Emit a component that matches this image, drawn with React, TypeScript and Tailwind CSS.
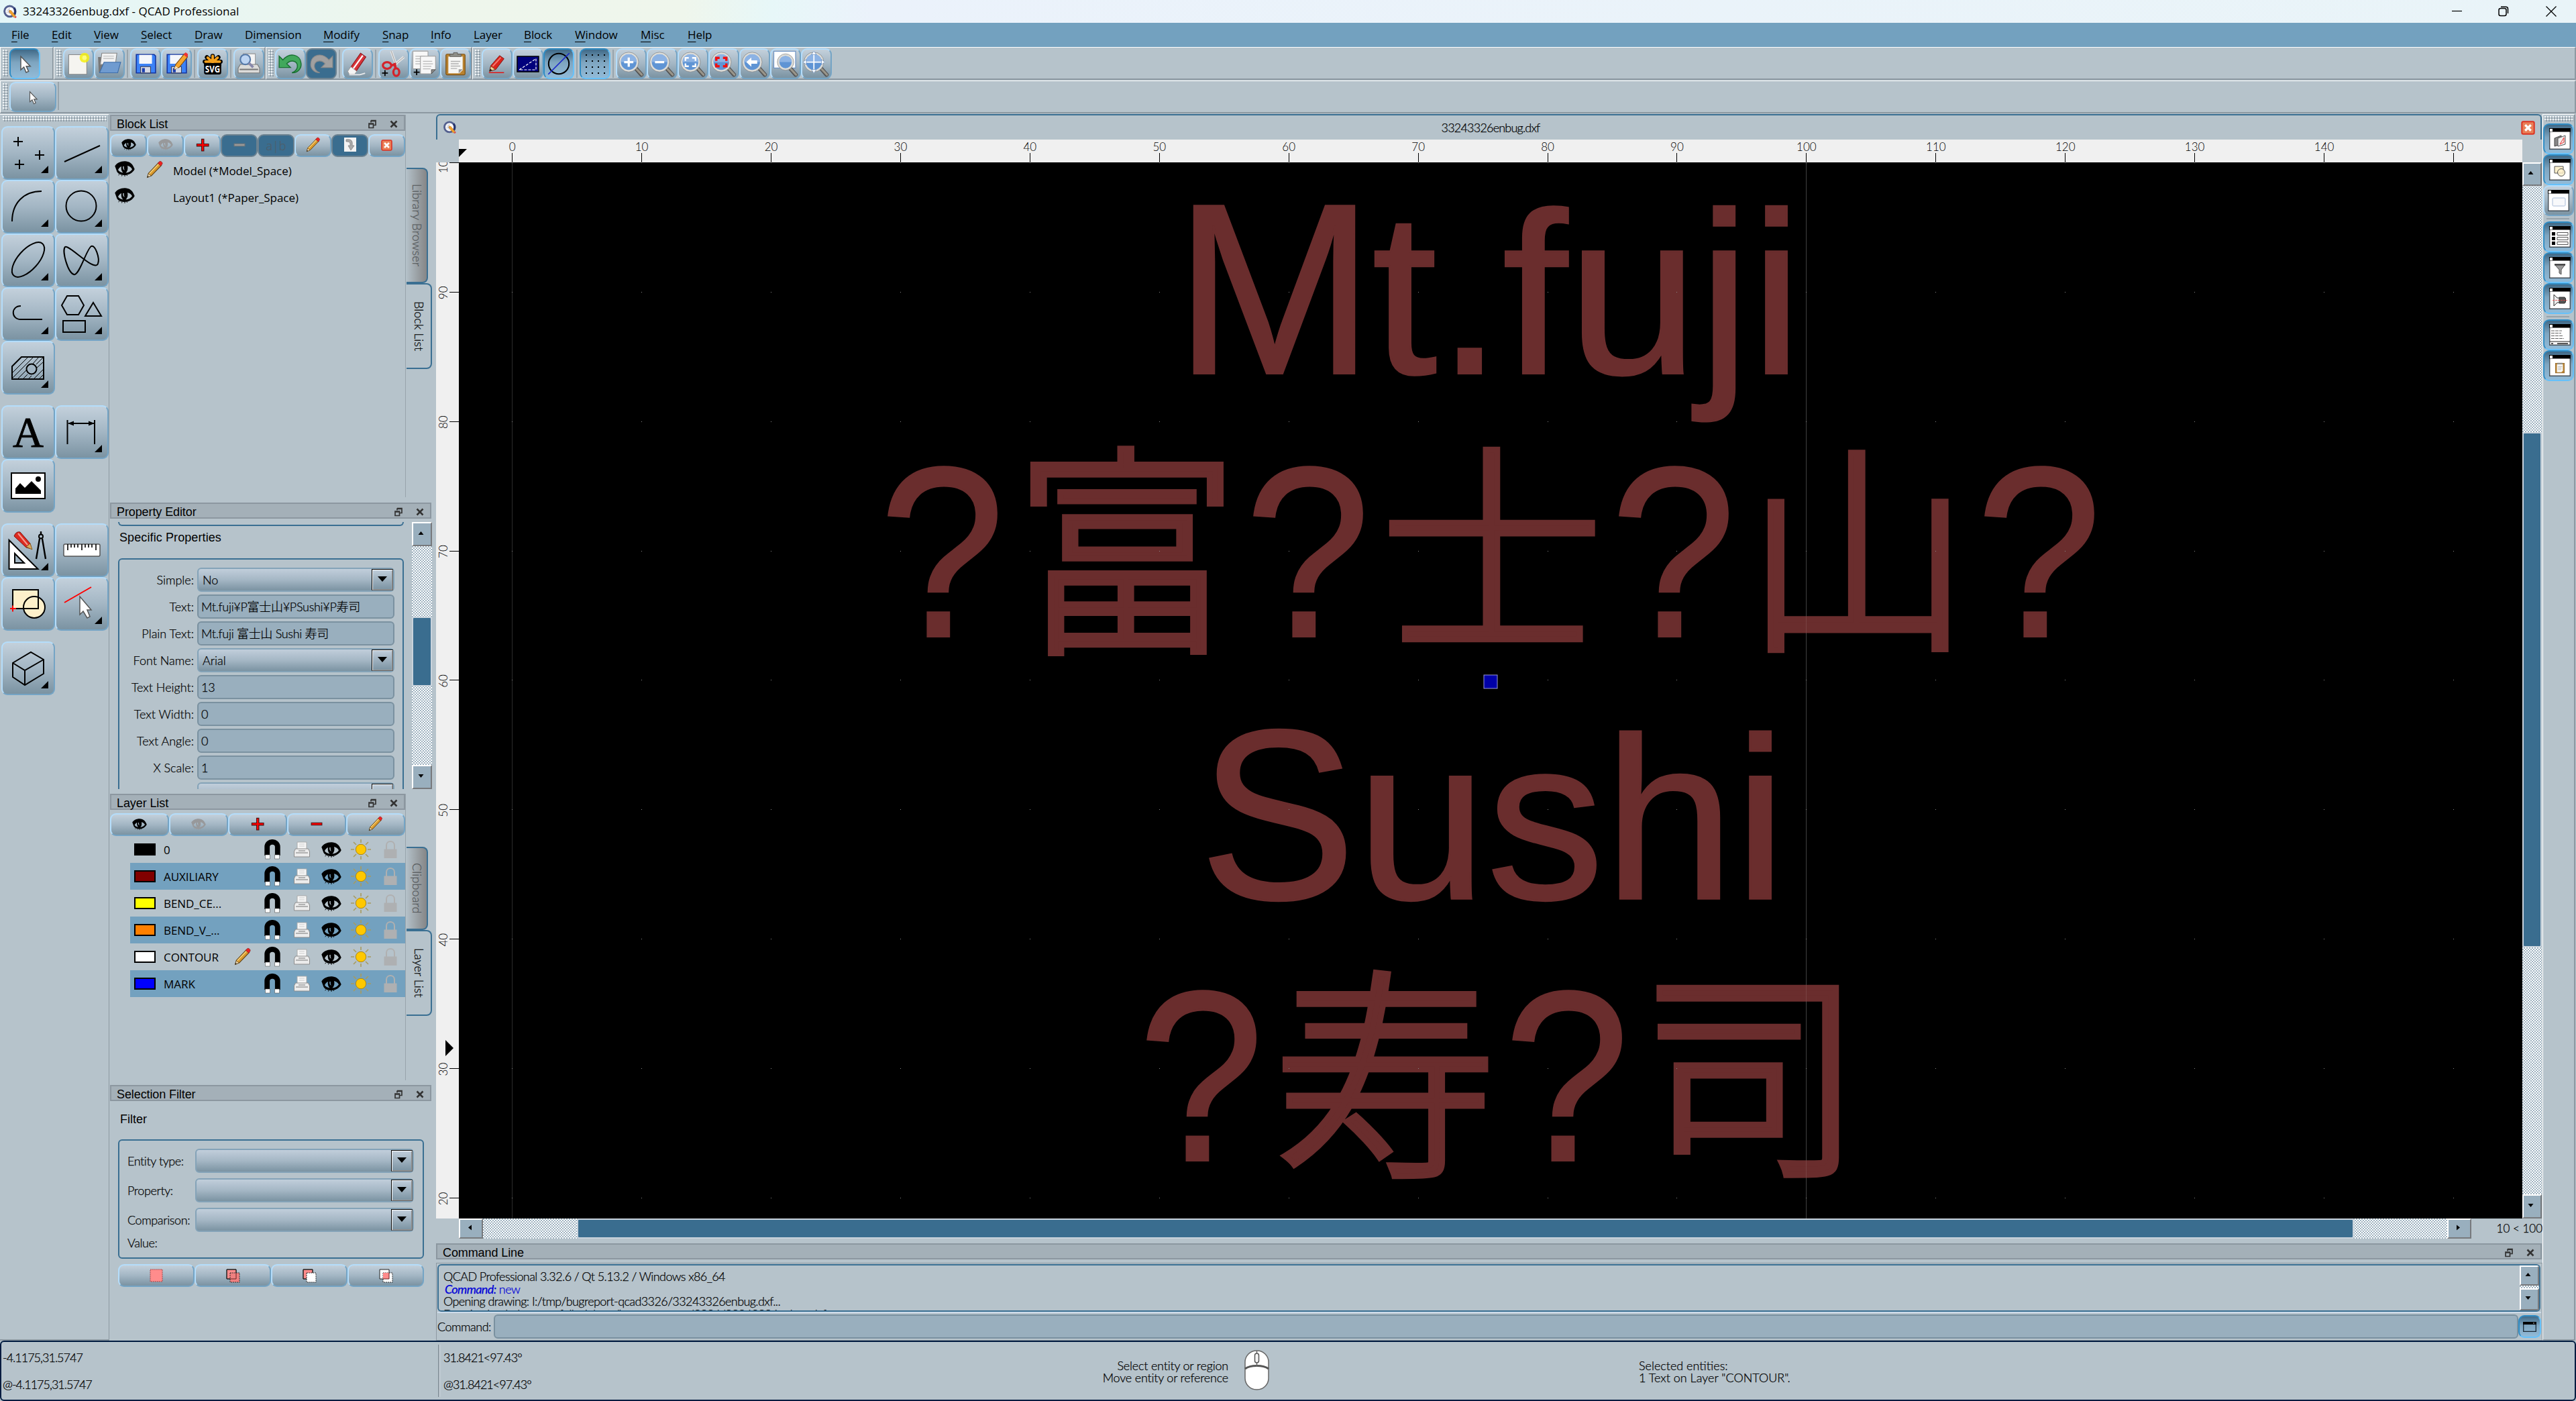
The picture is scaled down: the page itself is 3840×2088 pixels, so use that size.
import type { ReactNode } from "react";
import clsx from "clsx";

const thin = "font-['Lato','Noto_Sans_CJK_JP',sans-serif] font-light text-black [-webkit-text-stroke:0.25px]";

/* ---------- icons ---------- */

type IconProps = { className?: string; off?: boolean };

function Svg({ className = "size-8", box = "0 0 32 32", children }: { className?: string; box?: string; children: ReactNode }) {
  return (
    <svg viewBox={box} className={clsx("shrink-0", className)} fill="none">
      {children}
    </svg>
  );
}

function Cursor({ className }: IconProps) {
  return (
    <Svg className={className}>
      <path d="M10 5v20l4.600-4 3.400 8 3.600-1.600-3.400-7.600h6z" fill="#fff" stroke="#555" strokeWidth="1.500" />
    </Svg>
  );
}

function Eye({ className, off }: IconProps) {
  const c = off ? "#98999b" : "#000";
  return (
    <Svg className={className} box="0 0 30 23">
      <path
        fillRule="evenodd"
        fill={c}
        d="M.3 7.500C3 3 9 0 15.500.3 21 .5 26 3.500 28 8.500l1.700 3.500C27 18 20 21.300 14 21 8 20.800 3.500 18 2.700 14 1.800 11.500 1 9.500.3 7.500zM5 13.300c1.500 2 4 3.600 7.500 4.200C10 15 9.200 11.500 10 8c-2 .8-4 2.500-5 5.300zM19 7c1 4 .3 8-2.500 10.500 4-.3 7.500-2 9.500-5.200C24.500 9.500 22 7.600 19 7zM12.300 8c-.4 3.500.8 5.700 2.700 5.500-1-.8-1.500-3-1.200-5.500z"
      />
      <path d="M7 20l-1.500 1M11 21l-.5 1.500M15 20.500V23M18 20.500l.5 1.500" stroke={c} />
    </Svg>
  );
}

function Pencil({ className }: IconProps) {
  return (
    <Svg className={className}>
      <path d="M3 29l2-7L22 4l5 4.500L10 26z" fill="#d99a2e" stroke="#5a3d12" strokeWidth="1.200" />
      <path d="M6.500 22.500L22.500 6" stroke="#f7d27a" strokeWidth="1.800" />
      <path d="M21 5l2.500-3c2-1.500 6 1.500 5 4l-2.500 3.500z" fill="#ee2222" stroke="#8a1a1a" strokeWidth=".8" />
      <path d="M3 29l1.800-6.500 4.700 3.800z" fill="#f0dcb4" stroke="#5a3d12" strokeWidth=".8" />
      <path d="M3 29l.7-2.800 2 1.700z" fill="#222" />
    </Svg>
  );
}

function Plus({ className }: IconProps) {
  return (
    <Svg className={className}>
      <path d="M14 4.500h4.500V14H28v4.500h-9.500V28H14v-9.500H4.500V14H14z" fill="#f00" stroke="#4a1414" strokeWidth="1.500" />
    </Svg>
  );
}

function Minus({ className, off }: IconProps) {
  return (
    <Svg className={className}>
      <path d="M4.500 13.500h23v5h-23z" fill={off ? "#9a9a9a" : "#f00"} stroke={off ? "#777" : "#4a1414"} strokeWidth="1.500" />
    </Svg>
  );
}

function CloseBox({ className }: IconProps) {
  return (
    <Svg className={className}>
      <rect x="2" y="2" width="28" height="28" rx="3" fill="#e98058" stroke="#dc3222" strokeWidth="3" />
      <path d="M9.500 9.500l13 13M22.500 9.500l-13 13" stroke="#fff" strokeWidth="5" />
    </Svg>
  );
}

function Logo({ className }: IconProps) {
  return (
    <Svg className={className}>
      <circle cx="16" cy="15" r="12" fill="#fff" stroke="#53608f" strokeWidth="4.500" />
      <path d="M26 7c4 6 4 12-1 18" stroke="#26346c" strokeWidth="4.500" />
      <path d="M8 17h14M15 7v15M9 12l12 8M11 9l6 6" stroke="#99a" strokeWidth="1" />
      <path d="M15 13l4 0 10 12-4 4-10-12z" fill="#f2a02c" stroke="#a86312" strokeWidth=".7" />
      <path d="M26 29l4-4 1.500 3-2.500 2.500z" fill="#d44" />
    </Svg>
  );
}

function Magnifier({ children, page }: { children?: ReactNode; page?: boolean }) {
  return (
    <Svg className="size-10">
      {page && <path d="M2 1h26v20H2z" fill="#fff" stroke="#6d93c4" />}
      <path d="M21 21l7 8" stroke="#555" strokeWidth="5" strokeLinecap="round" />
      <path d="M22.500 22.500l6 6.500" stroke="#99958a" strokeWidth="2.600" strokeLinecap="round" />
      <circle cx={page ? 16 : 13} cy="14" r={page ? 8.500 : 10.500} fill="#5f94d4" stroke="#dcdcd8" strokeWidth="2.400" />
      <path d={page ? "M8.500 14a7.500 7.500 0 0115 0z" : "M3.500 14a9.500 9.500 0 0119 0z"} fill="#8db3e4" />
      <circle cx={page ? 16 : 13} cy="14" r={page ? 9.800 : 11.800} stroke="#888" strokeWidth=".6" />
      {children}
    </Svg>
  );
}

function Floppy({ children }: { children?: ReactNode }) {
  return (
    <Svg className="size-[34px]">
      <path d="M3 3h25l2 2v24H3z" fill="#3c82f6" stroke="#1434a0" strokeWidth="1.500" />
      <path d="M7 3.500h18V16H7z" fill="#f4f6fb" />
      <path d="M9 20h14v9H9z" fill="#d4d8e4" stroke="#223" strokeWidth=".8" />
      <path d="M11 22h4v6h-4z" fill="#1c3fae" />
      {children}
    </Svg>
  );
}

function ClipboardIcon({ className = "size-[38px]" }: IconProps) {
  return (
    <Svg className={className}>
      <rect x="4" y="4" width="24" height="26" rx="1.500" fill="#b9822f" stroke="#7a5014" />
      <path d="M7 7h18v17l-4 4H7z" fill="#f6f6f4" />
      <path d="M10 13h12M10 16h10M10 19h12M10 22h8" stroke="#b0b0b0" strokeWidth="1.200" />
      <path d="M25 23l-5 5v-5z" fill="#999" />
      <path d="M9 7V4h4.500V2h5v2H23v3z" fill="#8f8f88" stroke="#555" strokeWidth=".7" />
    </Svg>
  );
}

function Sheet({ x, y }: { x: number; y: number }) {
  return (
    <g transform={`translate(${x} ${y})`}>
      <path d="M0 0h18v16l-5 5H0z" fill="#f7f7f7" stroke="#999" strokeWidth=".8" />
      <path d="M3 6h11M3 9h12M3 12h10M3 15h9" stroke="#b8b8b8" />
      <path d="M18 16l-5 5v-5z" fill="#888" stroke="#444" strokeWidth=".6" />
    </g>
  );
}

const FloatIcon = () => (
  <Svg className="h-[14px] w-[12px]" box="0 0 12 14">
    <path d="M4 1.500h7v7H8M4 1.500v3M4 2.500h7" stroke="#333" strokeWidth="1.700" />
    <path d="M1 6h6.500v6.500H1zM1 7h6.500" stroke="#333" strokeWidth="1.700" />
  </Svg>
);

const XIcon = () => (
  <Svg className="size-3" box="0 0 12 12">
    <path d="M1.500 1.500l9 9M10.500 1.500l-9 9" stroke="#333" strokeWidth="2.600" />
  </Svg>
);

/* ---------- building blocks ---------- */

function Btn({ on, off, className, children }: { on?: boolean; off?: boolean; className?: string; children?: ReactNode }) {
  return (
    <div
      className={clsx(
        "relative flex items-center justify-center overflow-hidden rounded-[9px] border-2",
        on
          ? "border-[#2f8cc4] border-r-[#66c1f9] border-b-[#66c1f9] bg-linear-to-b from-[#406a88] via-[#7ea5c0] via-45% to-[#92bbd8]"
          : off
            ? "border-[#6c8291] bg-[#3a6d8f]"
            : "border-[#b4ddfb] border-r-[#74a4c5] border-b-[#74a4c5] bg-linear-to-b from-[#c3d0db] via-[#a3b6c4] to-[#7b93a2]",
        className
      )}
    >
      {children}
    </div>
  );
}

const TB = "h-[46px] w-[46px]";

const Dots = ({ className }: { className: string }) => (
  <div className={clsx("bg-[conic-gradient(from_270deg_at_2px_2px,#f3f6f8_90deg,transparent_90deg_180deg,#8e9ba5_180deg_270deg,transparent_270deg)] bg-[length:4px_4px]", className)} />
);

const Sep = () => <div className="mx-[3px] h-[42px] w-[2px] shrink-0 self-center bg-[#98a4ac]" />;

function Bar({ className, children }: { className: string; children?: ReactNode }) {
  return (
    <div className={clsx("flex h-[49px] items-start border-t border-r-2 border-b-2 border-l border-t-white border-r-[#8d99a2] border-b-[#8d99a2] border-l-white pt-px pl-[3px]", className)}>
      <Dots className="mt-0.5 mr-0.5 h-10 w-2 shrink-0" />
      {children}
    </div>
  );
}

function DockTitle({ children, className }: { children: ReactNode; className?: string }) {
  return (
    <div className={clsx("flex h-6 shrink-0 items-center border-2 border-[#8c97a0] bg-[#a4b0b8] pr-[9px] pl-2 font-['Liberation_Sans'] text-[18px] font-normal tracking-[-0.1px] text-black [-webkit-text-stroke:0]", className)}>
      <span className="flex-1 pt-[3px] leading-none whitespace-nowrap">{children}</span>
      <div className="flex items-center gap-5 pt-[3px]">
        <FloatIcon />
        <XIcon />
      </div>
    </div>
  );
}

function Combo({ value, className }: { value?: string; className?: string }) {
  return (
    <div className={clsx("flex items-stretch justify-between rounded-md border-2 border-[#84a3b8] bg-linear-to-b from-[#c1cedb] via-[#a5b7c5] to-[#7b93a2] pl-1.5", className)}>
      <span className="self-center text-[18px] leading-none">{value}</span>
      <div className="flex w-8 items-center justify-center border border-t-black border-r-[#666] border-b-[#666] border-l-black bg-linear-to-b from-[#c1cedb] to-[#7b93a2] shadow-[inset_1px_1px_0_#fff,inset_-1px_-1px_0_#999]">
        <svg viewBox="0 0 14 8" className="-mt-0.5 h-2 w-3.5">
          <path d="M0 0h14L7 8z" />
        </svg>
      </div>
    </div>
  );
}

const arrows = {
  up: "M0 5h8L4 0z",
  down: "M0 0h8L4 5z",
  left: "M5 0v8L0 4z",
  right: "M0 0v8l5-4z",
};

function ScrollBtn({ dir, className }: { dir: keyof typeof arrows; className: string }) {
  const tall = dir === "left" || dir === "right";
  return (
    <div className={clsx("flex shrink-0 items-center justify-center border-2 border-t-white border-r-[#77797c] border-b-[#77797c] border-l-white bg-[#99afbe] pr-1 pb-1", className)}>
      <svg viewBox={tall ? "0 0 5 8" : "0 0 8 5"} className={tall ? "h-[9px] w-[5px]" : "h-[5px] w-[9px]"}>
        <path d={arrows[dir]} />
      </svg>
    </div>
  );
}

const checker = "bg-[repeating-conic-gradient(#fff_0_25%,#9fb3c1_0_50%)] bg-[length:4px_4px]";
const thumb = "shrink-0 rounded-[3px] border-2 border-[#c9d3dc] bg-[#3a6d8f]";

function SideTabs({ first, second, h1, h2, className }: { first: string; second: string; h1: string; h2: string; className: string }) {
  return (
    <div className={clsx("flex flex-col items-start text-[18px]", className)}>
      <div className={clsx("flex w-8 items-center justify-center rounded-r-lg border-2 border-l-0 border-[#3a6f92] bg-linear-to-r from-[#b3c0c8] to-[#858687] text-[#55595c] [writing-mode:vertical-rl]", h1)}>
        <span className="tracking-[0.1px]">{first}</span>
      </div>
      <div className={clsx("flex w-[38px] items-center justify-center rounded-r-lg border-2 border-l-0 border-[#3a6f92] [writing-mode:vertical-rl]", h2)}>
        <span>{second}</span>
      </div>
    </div>
  );
}

/* ---------- header ---------- */

const menus = [
  ["F", "ile", "w-[60px]"],
  ["E", "dit", "w-[63px]"],
  ["V", "iew", "w-[70px]"],
  ["S", "elect", "w-[80px]"],
  ["D", "raw", "w-[75px]"],
  ["D", "imension", "w-[117px]"],
  ["M", "odify", "w-[88px]"],
  ["S", "nap", "w-[72px]"],
  ["I", "nfo", "w-[64px]"],
  ["L", "ayer", "w-[75px]"],
  ["B", "lock", "w-[76px]"],
  ["W", "indow", "w-[98px]"],
  ["M", "isc", "w-[70px]"],
  ["H", "elp", "w-[60px]"],
];

function Header() {
  return (
    <>
      <div className="flex h-[34px] items-center bg-[linear-gradient(90deg,#e4f6f8_0,#eef6ec_660px,#eff6ec_1020px,#e7f7f8_1150px,#ebf2fb_1300px,#e9f4f8_3840px)] pr-[29px] pl-1">
        <Logo className="size-[21px]" />
        <span className="ml-[9px] flex-1 font-['Open_Sans'] text-[17px] tracking-[0.05px] text-black">33243326enbug.dxf - QCAD Professional</span>
        <Svg className="mr-[54px] h-4 w-[15px]" box="0 0 15 16">
          <path d="M0 7.500h15" stroke="#000" strokeWidth="1.200" />
        </Svg>
        <Svg className="mr-[55px] size-4" box="0 0 16 16">
          <rect x="1" y="3.500" width="11" height="11" rx="2.500" stroke="#000" strokeWidth="1.500" />
          <path d="M4 1.200h7.500a3 3 0 013 3V11" stroke="#000" strokeWidth="1.500" />
        </Svg>
        <Svg className="size-4" box="0 0 16 16">
          <path d="M.5.5l15 15M15.500.5l-15 15" stroke="#000" strokeWidth="1.300" />
        </Svg>
      </div>
      <div className="flex h-9 items-center bg-[#73a1bf] pl-[17px] font-['Open_Sans'] text-[17px] tracking-[-0.1px] text-black">
        {menus.map(([k, rest, w], i) => (
          <span key={i} className={w}>
            {rest === "imension" ? (
              <>D<u className="decoration-1 underline-offset-4">i</u>mension</>
            ) : (
              <><u className="decoration-1 underline-offset-4">{k}</u>{rest}</>
            )}
          </span>
        ))}
      </div>
    </>
  );
}

function Toolbars() {
  return (
    <>
      <div className="flex h-[50px]">
        <Bar className="w-20">
          <Btn on className={TB}><Cursor className="size-8" /></Btn>
        </Bar>
        <Bar className="w-[316px]">
          <Btn className={TB}>
            <Svg className="size-9">
              <path d="M3 4h24v26H3z" fill="#f5f4f0" stroke="#888" />
              <circle cx="24" cy="8" r="6.500" fill="#f4ee10" fillOpacity=".85" />
              <circle cx="24" cy="8" r="3" fill="#fdfb80" />
            </Svg>
          </Btn>
          <Btn className={TB}>
            <Svg className="size-9">
              <path d="M1 7h9l2 2h8v18H2z" fill="#777" />
              <path d="M6 2h20l-2 15H4z" fill="#f2f2f2" stroke="#888" />
              <path d="M8 6h14M8 9h14" stroke="#bbb" />
              <path d="M9 14h22l-4 14H3z" fill="#6f9bd0" stroke="#3e6da8" />
            </Svg>
          </Btn>
          <Sep />
          <Btn className={TB}><Floppy /></Btn>
          <Btn className={TB}>
            <Floppy>
              <path d="M13 24l2-7L27 2l5 4-12 15z" fill="#f5a52c" stroke="#7a4a10" />
              <path d="M13 24l1.500-5 4 3z" fill="#f3e2c0" />
              <path d="M26 3l3-3 4 3-2.500 4z" fill="#e33" />
            </Floppy>
          </Btn>
          <Sep />
          <Btn className={TB}>
            <Svg className="size-[34px]">
              <path d="M16 14V5M16 14L8 7M16 14l8-7M16 13H5M16 13h11" stroke="#000" strokeWidth="6" strokeLinecap="round" />
              <rect x="4" y="14" width="24" height="17" rx="3" fill="#000" />
              <path d="M16 14V5M16 14L9 7.500M16 14l7-6.500M16 13H6M16 13h10" stroke="#f5a01c" strokeWidth="3.600" strokeLinecap="round" />
              <path d="M4 15h24v4H4z" fill="#000" />
              <text x="16" y="28.500" textAnchor="middle" fontSize="13" fontWeight="700" fill="#fff" fontFamily="Open Sans" textLength="21" lengthAdjust="spacingAndGlyphs">SVG</text>
            </Svg>
          </Btn>
          <Sep />
          <Btn className={TB}>
            <Svg className="size-[34px]">
              <path d="M8 2h17v16H8z" fill="#f4f4f4" stroke="#999" />
              <path d="M4 17h24l3 5v7H1v-7z" fill="#dcdcda" stroke="#777" />
              <path d="M3 24h26" stroke="#777" strokeWidth="2" />
              <circle cx="11" cy="10" r="7" fill="#bcd4f2" stroke="#5579a8" strokeWidth="2" />
              <path d="M16 15l6 6" stroke="#88a" strokeWidth="3.500" />
            </Svg>
          </Btn>
        </Bar>
        <Bar className="w-[308px]">
          <Btn className={TB}>
            <Svg className="size-9">
              <path d="M1 6v15h15l-5-5c4-5 12-5 14 1 1 5-2 9-7 11 8 0 13-6 12-13C29 4 15 0 6 11z" fill="#41a85c" stroke="#197032" strokeWidth="1.300" />
            </Svg>
          </Btn>
          <Btn off className={TB}>
            <Svg className="size-9">
              <path d="M31 6v15H16l5-5C17 11 9 11 7 17c-1 5 2 9 7 11C6 28 1 22 2 15 3 4 17 0 26 11z" fill="#a0a0a0" stroke="#8a8a8a" />
            </Svg>
          </Btn>
          <Sep />
          <Btn className={TB}>
            <Svg className="size-9">
              <path d="M6 22L20 2l7 5-13 19z" fill="#d8343a" stroke="#8c1518" />
              <path d="M10 23L23 5" stroke="#fff" strokeWidth="2" />
              <path d="M3 26l4-6 8 6-3 4H5z" fill="#f4f4f4" stroke="#999" strokeWidth=".8" />
              <path d="M5 30.500h14l7-2" stroke="#e8eaec" strokeWidth="1.600" />
            </Svg>
          </Btn>
          <Sep />
          <Btn className={TB}>
            <Svg className="size-10">
              <path d="M13 1l6 17M28 8L16 18" stroke="#e6e6e6" strokeWidth="3" />
              <path d="M13 1l6 17M28 8L16 18" stroke="#888" strokeWidth=".6" />
              <ellipse cx="8" cy="18" rx="5" ry="4" stroke="#d4222a" strokeWidth="2.600" />
              <ellipse cx="19" cy="26" rx="3.500" ry="4.500" stroke="#d4222a" strokeWidth="2.600" />
              <path d="M12 18l6-1M18 21l-1-6" stroke="#d4222a" strokeWidth="3" />
              <path d="M2 27h7M5.500 23.500v7" stroke="#000" strokeWidth="1.400" />
            </Svg>
          </Btn>
          <Btn className={TB}>
            <Svg className="size-10">
              <Sheet x={2} y={1} />
              <Sheet x={11} y={7} />
              <path d="M3 26h7M6.500 22.500v7" stroke="#000" strokeWidth="1.400" />
            </Svg>
          </Btn>
          <Btn className={TB}><ClipboardIcon /></Btn>
        </Bar>
        <Bar className="flex-1">
          <Btn className={TB}>
            <Svg className="size-[30px]">
              <path d="M4 28l2-9L20 3l7 5-13 17z" fill="#d9231c" stroke="#7c1410" />
              <path d="M9 20L22 6" stroke="#f47a70" strokeWidth="2" />
              <path d="M4 28l2-8 7 5z" fill="#efcf98" stroke="#5a3a12" strokeWidth=".7" />
              <path d="M4 28l1-4 3 2z" fill="#111" />
              <path d="M3 30h24" stroke="#e01818" strokeWidth="1.600" />
            </Svg>
          </Btn>
          <Btn className={TB}>
            <Svg className="h-[25px] w-[34px]" box="0 0 34 25">
              <rect x="1" y="1" width="32" height="23" fill="#00007c" stroke="#000" strokeWidth="1.500" />
              <path d="M4 21L29 4.500V21z" stroke="#fff" strokeWidth="1.200" strokeDasharray="4 2" />
            </Svg>
          </Btn>
          <Btn on className={TB}>
            <Svg className="size-9">
              <circle cx="16" cy="16" r="13.500" stroke="#000" strokeWidth="1.800" />
              <path d="M2 30L30 2" stroke="#1a28c8" strokeWidth="1.500" />
            </Svg>
          </Btn>
          <Sep />
          <Btn on className={TB}>
            <div className="grid grid-cols-4 gap-[7px]">
              {Array.from({ length: 16 }, (_, i) => (
                <i key={i} className="size-0.5 bg-black" />
              ))}
            </div>
          </Btn>
          <Sep />
          <Btn className={TB}><Magnifier><path d="M13 8.500v11M7.500 14h11" stroke="#fff" strokeWidth="2.600" /></Magnifier></Btn>
          <Btn className={TB}><Magnifier><path d="M7.500 14h11" stroke="#fff" strokeWidth="2.600" /></Magnifier></Btn>
          <Btn className={TB}><Magnifier><path d="M7 12.500V9h4M15 9h4v3.500M19 15.500V19h-4M11 19H7v-3.500" stroke="#fff" strokeWidth="1.900" /></Magnifier></Btn>
          <Btn className={TB}><Magnifier><path d="M7 12.500V9h4M15 9h4v3.500M19 15.500V19h-4M11 19H7v-3.500" stroke="#f01010" strokeWidth="2.800" /></Magnifier></Btn>
          <Btn className={TB}><Magnifier><path d="M6 14l6-5.500V12h7v4h-7v3.500z" fill="#fff" /></Magnifier></Btn>
          <Btn className={TB}><Magnifier page /></Btn>
          <Btn className={TB}>
            <Magnifier>
              <path d="M13 1v26M0 14h26" stroke="#fff" strokeWidth="1.400" />
              <path d="M10 5l3-4 3 4zM10 23l3 4 3-4zM4 11l-4 3 4 3zM22 11l4 3-4 3z" fill="#fff" stroke="#4a78b4" strokeWidth=".5" />
            </Magnifier>
          </Btn>
        </Bar>
      </div>
      <div className="flex h-[50px]">
        <Bar className="flex-1">
          <Btn className="h-[45px] w-[70px]"><Cursor className="size-6" /></Btn>
          <div className="ml-0.5 h-[42px] w-[2px] bg-[#98a4ac]" />
        </Bar>
      </div>
    </>
  );
}

/* ---------- left tool box ---------- */

function Tool({ more = true, children }: { more?: boolean; children: ReactNode }) {
  return (
    <Btn className="h-20 w-20">
      <svg viewBox="0 0 76 76" className="size-[76px] shrink-0" fill="none" stroke="#000" strokeWidth="2">
        {children}
      </svg>
      {more && (
        <svg viewBox="0 0 11 11" className="absolute right-2 bottom-2 size-[11px]">
          <path d="M11 0v11H0z" />
        </svg>
      )}
    </Btn>
  );
}

function ToolBox() {
  return (
    <div className="flex w-[163px] shrink-0 flex-col border-t border-r border-b-2 border-t-white border-r-[#8d99a2] border-b-[#8d99a2]">
      <Dots className="mt-0.5 ml-1 h-2 w-[155px]" />
      <div className="mt-[7px] ml-0.5 flex flex-wrap">
        <Tool>
          <path d="M16 21h14M23 14v14M48 41h14M55 34v14M18 55h14M25 48v14" />
        </Tool>
        <Tool><path d="M12 51L65 27" /></Tool>
        <Tool><path d="M14 60C14 32 32 15 58 15" /></Tool>
        <Tool><circle cx="37" cy="37" r="22.500" /></Tool>
        <Tool><ellipse cx="38" cy="37" rx="32" ry="15" transform="rotate(-48 38 37)" /></Tool>
        <Tool>
          <path d="M13 18c6-4 44 38 49 25 3-8-4-29-10-26C45 21 34 62 26 59 17 56 8 24 13 18z" />
        </Tool>
        <Tool><path d="M27 26c-15 0-15 20 0 20h32" /></Tool>
        <Tool>
          <path d="M16 11h17l8 14-8 14H16L8 25zM55 21l12 20H43zM10 48h33v17H10z" />
        </Tool>
        <Tool>
          <path d="M14 36l14-14h33v33H14z" />
          <path d="M14 46l24-24M14 54l32-32M22 55l13-13M45 32l9-10M30 55l7-7M38 55l5-5M46 55l15-15M50 33l11-11M54 55l7-7M51 38l10-9" strokeWidth="1" />
          <circle cx="43" cy="40" r="7.500" fill="#a2b5c3" />
        </Tool>
      </div>
      <div className="mt-4 ml-0.5 flex flex-wrap">
        <Tool more={false}>
          <text x="38" y="60" textAnchor="middle" fontFamily="Liberation Serif" fontSize="64" fill="#000" stroke="#000" strokeWidth=".8" textLength="46" lengthAdjust="spacingAndGlyphs">A</text>
        </Tool>
        <Tool>
          <path d="M16.500 20v36M57 20v36M18 25h38" />
          <path d="M17 25l9-3.500v7zM57 25l-9-3.500v7z" fill="#000" stroke="none" />
        </Tool>
        <Tool more={false}>
          <path d="M13 19h50v38H13z" fill="#fff" />
          <path d="M19 50V42l7-8 7 7 10-10 14 14v5z" fill="#000" stroke="none" />
          <circle cx="53" cy="28" r="4" fill="#000" stroke="none" />
        </Tool>
      </div>
      <div className="mt-4 ml-0.5 flex flex-wrap">
        <Tool>
          <path d="M9.500 23v43h43z" fill="#fff" />
          <path d="M18 43v14h14z" fill="#a2b5c3" />
          <path d="M17 17c2-5 5-7 9-6l15 17 2 8-8-2z" fill="#dd2a20" stroke="#7c1410" strokeWidth="1" />
          <path d="M23 13l14 17" stroke="#f59a90" strokeWidth="2" />
          <path d="M35 33l6-5 3 9z" fill="#d8a860" stroke="#7c5410" strokeWidth=".8" />
          <circle cx="57" cy="17.500" r="3" />
          <path d="M57 10v4M55 21l-5 30M59 21l5 30" strokeWidth="2.400" />
        </Tool>
        <Tool more={false}>
          <rect x="11" y="29" width="54" height="18" rx="2" fill="#fff" stroke="#555" strokeWidth="1.500" />
          <path d="M17 29v9M22 29v5M27 29v5M32 29v5M38 29v9M43 29v5M48 29v5M53 29v5M59 29v9" strokeWidth="1.600" />
        </Tool>
        <Tool more={false}>
          <path d="M15 17h38v28H15z" fill="#fdf0cb" />
          <circle cx="47" cy="43" r="16" fill="#fdf0cb" />
          <path d="M15 45h38V17" />
          <path d="M11 45h9M15 40.500v9" stroke="#f00" />
        </Tool>
        <Tool>
          <path d="M12 36l40-23" stroke="#f00" />
          <path d="M35 27v27l5-5 6 10 4-2-4-10h6z" fill="#fff" stroke="#555" strokeWidth="1.500" />
        </Tool>
      </div>
      <div className="mt-4 ml-0.5 flex">
        <Tool><path d="M15 30l27-16 19 11v21L33 63 15 51zM15 30l18 11 28-16M33 41v22" /></Tool>
      </div>
    </div>
  );
}

/* ---------- docks ---------- */

const layers = [
  { name: "0", swatch: "bg-black" },
  { name: "AUXILIARY", swatch: "bg-[#800000]", sel: true },
  { name: "BEND_CE...", swatch: "bg-[#ffff00]" },
  { name: "BEND_V_...", swatch: "bg-[#ff8000]", sel: true },
  { name: "CONTOUR", swatch: "bg-white", edit: true },
  { name: "MARK", swatch: "bg-[#0000ff]", sel: true },
];

const props = [
  ["Simple:", "No", "combo"],
  ["Text:", "Mt.fuji¥P富士山¥PSushi¥P寿司"],
  ["Plain Text:", "Mt.fuji 富士山 Sushi 寿司"],
  ["Font Name:", "Arial", "combo"],
  ["Text Height:", "13"],
  ["Text Width:", "0"],
  ["Text Angle:", "0"],
  ["X Scale:", "1"],
  ["", "", "combo"],
];

const listFont = "font-['Open_Sans'] text-[17px] font-normal [-webkit-text-stroke:0]";

function LayerRow({ name, swatch, sel, edit }: { name: string; swatch: string; sel?: boolean; edit?: boolean }) {
  return (
    <div className={clsx("ml-[30px] flex h-10 items-center pl-1.5", sel && "bg-[#73a1bf]")}>
      <i className={clsx("mr-3 h-[18px] w-8 border-2 border-black", swatch)} />
      <span className={clsx("w-[96px] pt-px tracking-[-0.05px] whitespace-nowrap", listFont)}>{name}</span>
      <div className="flex w-11 justify-center">{edit && <Pencil className="h-7 w-[30px]" />}</div>
      <div className="flex w-11 justify-center">
        <Svg className="h-[30px] w-6" box="0 0 24 30">
          <path d="M4.200 24V11C4.200 1.500 19.800 1.500 19.800 11v13" stroke="#000" strokeWidth="7.800" />
          <path d="M1.500 23h7v6h-7zM15.500 23h7v6h-7z" fill="#fff" stroke="#555" strokeWidth=".6" />
        </Svg>
      </div>
      <div className="flex w-11 justify-center">
        <Svg className="size-6" box="0 0 24 24">
          <path d="M5 1h14v11H5z" fill="#f6f6f6" stroke="#aaa" />
          <path d="M8 4h8M8 7h8" stroke="#ccc" />
          <path d="M2.500 11h19L23.500 15v8H.5v-8z" fill="#ececec" stroke="#8c8c8c" />
          <path d="M3 17h18M7 14h10" stroke="#777" />
        </Svg>
      </div>
      <div className="flex w-11 justify-center"><Eye className="h-[23px] w-[30px]" /></div>
      <div className="flex w-11 justify-center">
        <Svg className="size-[30px]" box="0 0 30 30">
          <path d="M15 0v5M15 25v5M0 15h5M25 15h5M4 4l4 4M22 22l4 4M4 26l4-4M22 8l4-4" stroke="#a79b60" strokeWidth="1.600" />
          <circle cx="15" cy="15" r="7.700" fill="#ffc800" stroke="#a8861c" />
        </Svg>
      </div>
      <div className="flex w-11 justify-center">
        <Svg className="h-7 w-5" box="0 0 20 28">
          <path d="M4 14V8c0-8 12-8 12 0v6" stroke="#b0b0b0" strokeWidth="2" />
          <path d="M.5 13.500h19V27H.5z" fill="#aeb0b2" />
        </Svg>
      </div>
    </div>
  );
}

function Docks() {
  return (
    <div className={clsx("ml-px flex w-[486px] shrink-0 flex-col", thin)}>
      {/* Block list */}
      <div className="flex h-[579px] pt-px">
        <div className="h-[570px] w-[441px] border-r border-[#98a4ac]">
          <DockTitle>Block List</DockTitle>
          <div className="mt-[5px] grid grid-cols-8">
            <Btn className="h-[34px]"><Eye className="-mt-1 h-[17px] w-[22px]" /></Btn>
            <Btn className="h-[34px]"><Eye off className="-mt-1 h-[17px] w-[22px]" /></Btn>
            <Btn className="h-[34px]"><Plus className="-mt-0.5 size-6" /></Btn>
            <Btn off className="h-[34px]"><Minus off className="-mt-0.5 h-[22px] w-[24px]" /></Btn>
            <Btn off className="h-[34px]"><span className="font-['Open_Sans'] text-[18px] leading-none text-[#4d5f6c]">a|b</span></Btn>
            <Btn className="h-[34px]"><Pencil className="-mt-0.5 size-6" /></Btn>
            <Btn off className="h-[34px]">
              <Svg className="-mt-1 h-[21px] w-[18px]" box="0 0 18 21">
                <path d="M0 0h18v21H0z" fill="#f3f3f3" />
                <path d="M3 3c8-1 10 2 9 9h3l-5 7-4-7h3c0-4 0-6-6-6z" fill="#aaa" stroke="#777" strokeWidth=".7" />
              </Svg>
            </Btn>
            <Btn className="h-[34px]"><CloseBox className="-mt-0.5 size-[17px]" /></Btn>
          </div>
          {["Model (*Model_Space)", "Layout1 (*Paper_Space)"].map((name, i) => (
            <div key={name} className={clsx("flex h-10 items-center pl-[7px]", listFont)}>
              <Eye className="-mt-1.5 h-[23px] w-[30px]" />
              <div className="mr-3 ml-[15px] w-[30px]">{i === 0 && <Pencil className="-mt-0.5 h-7 w-[30px]" />}</div>
              <span className="pt-px tracking-[-0.05px]">{name}</span>
            </div>
          ))}
        </div>
        <SideTabs className="mt-[79px] ml-px" first="Library Browser" second="Block List" h1="h-[172px]" h2="h-[128px]" />
      </div>

      {/* Property editor */}
      <div className="h-[434px]">
        <DockTitle className="w-[479px]">Property Editor</DockTitle>
        <div className="mt-[5px] flex h-[398px] w-[480px] justify-between overflow-hidden">
          <div className="ml-3 w-[426px]">
            <div className="h-1.5 rounded-b-md border-2 border-t-0 border-[#3a6f92]" />
            <div className="mt-[5px] ml-0.5 font-['Liberation_Sans'] text-[18px] leading-6 font-normal tracking-[0.1px] [-webkit-text-stroke:0]">Specific Properties</div>
            <div className="mt-[19px] flex h-[390px] flex-col gap-1 rounded-md border-2 border-[#3a6f92] pt-3 pr-3">
              {props.map(([label, value, kind], i) => (
                <div key={i} className="flex h-9 shrink-0 items-center text-[18px]">
                  <span className="mr-[5px] w-[111px] text-right leading-none whitespace-nowrap">{label}</span>
                  {kind ? (
                    <Combo value={value} className="h-full w-[294px]" />
                  ) : (
                    <div className="flex h-full w-[294px] items-center rounded-md border-2 border-[#7a91a0] bg-[#99afbe] pl-1 leading-none tracking-[-0.3px] whitespace-nowrap">{value}</div>
                  )}
                </div>
              ))}
            </div>
          </div>
          <div className={clsx("flex w-[30px] flex-col", checker)}>
            <ScrollBtn dir="up" className="h-[36px]" />
            <div className={clsx("mt-[105px] h-[104px]", thumb)} />
            <ScrollBtn dir="down" className="mt-auto h-[36px]" />
          </div>
        </div>
      </div>

      {/* Layer list */}
      <div className="flex h-[434px]">
        <div className="h-[427px] w-[441px] border-r border-[#98a4ac]">
          <DockTitle>Layer List</DockTitle>
          <div className="mt-[5px] grid grid-cols-5">
            <Btn className="h-[34px]"><Eye className="-mt-0.5 h-[17px] w-[22px]" /></Btn>
            <Btn className="h-[34px]"><Eye off className="-mt-0.5 h-[17px] w-[22px]" /></Btn>
            <Btn className="h-[34px]"><Plus className="-mt-0.5 size-6" /></Btn>
            <Btn className="h-[34px]"><Minus className="-mt-0.5 h-[22px] w-[24px]" /></Btn>
            <Btn className="h-[34px]"><Pencil className="-mt-0.5 size-6" /></Btn>
          </div>
          {layers.map((l) => (
            <LayerRow key={l.name} {...l} />
          ))}
        </div>
        <SideTabs className="mt-[79px] ml-px" first="Clipboard" second="Layer List" h1="h-[124px]" h2="h-[128px]" />
      </div>

      {/* Selection filter */}
      <div className="flex-1 text-[18px]">
        <DockTitle className="w-[479px]">Selection Filter</DockTitle>
        <div className="mt-[15px] ml-[15px] font-['Liberation_Sans'] text-[18px] leading-6 font-normal [-webkit-text-stroke:0]">Filter</div>
        <div className="mt-[18px] ml-3 flex h-[178px] w-[456px] flex-col gap-2 rounded-md border-2 border-[#3a6f92] pt-3 pl-3 tracking-[-0.4px]">
          {["Entity type:", "Property:", "Comparison:"].map((label) => (
            <div key={label} className="flex h-9 items-center">
              <span className="w-[101px]">{label}</span>
              <Combo className="h-full w-[326px]" />
            </div>
          ))}
          <span className="-mt-0.5 leading-5">Value:</span>
        </div>
        <div className="mt-2 ml-3 grid w-[456px] grid-cols-4">
          {[0, 1, 2, 3].map((k) => (
            <Btn key={k} className="h-[34px]">
              <Svg className="size-[21px]" box="0 0 21 21">
                {k === 0 && <path d="M1 1h18v18H1z" fill="#ff8c8c" stroke="#a44" strokeDasharray="2 1" />}
                {k > 0 && (
                  <>
                    <path d="M1 1h14v14H1z" fill={k === 3 ? "#fff" : "#ff8c8c"} stroke="#222" />
                    <path d="M6 6h14v14H6z" fill={k === 1 ? "#f08080" : "#fff"} stroke="#333" strokeDasharray="2 1" />
                    {k === 3 && <path d="M6 6h9v9H6z" fill="#ff8c8c" />}
                    {k < 3 && <path d="M6 15H1V1h14v5" stroke="#222" />}
                    {k !== 2 && <path d="M15 6v9H6" stroke="#622" />}
                  </>
                )}
              </Svg>
            </Btn>
          ))}
        </div>
      </div>
    </div>
  );
}

/* ---------- drawing window ---------- */

const STEP = 192.92;
const CX = 2221.7;

function HRuler() {
  return (
    <svg viewBox="684 208 3076 34" className="h-[34px] w-[3076px] bg-[#f0f0f0]">
      {Array.from({ length: 16 }, (_, i) => {
        const x = 763.7 + i * STEP;
        return (
          <g key={i}>
            <text x={x} y="225" textAnchor="middle" fontFamily="Lato" fontWeight="300" fontSize="17">{i * 10}</text>
            <path d={`M${Math.floor(x) + 0.5} 228v14`} stroke="#000" />
          </g>
        );
      })}
      <path d="M672 222h24l-12 12z" />
    </svg>
  );
}

function VRuler() {
  return (
    <svg viewBox="650 242 34 1574" className="h-[1574px] w-[34px] bg-[#f0f0f0]">
      {Array.from({ length: 9 }, (_, i) => {
        const y = 242.5 + i * 192.87;
        return (
          <g key={i}>
            <text transform={`translate(666.5 ${y + 1}) rotate(-90)`} textAnchor="middle" fontFamily="Lato" fontWeight="300" fontSize="17">{100 - i * 10}</text>
            <path d={`M670 ${Math.floor(y) + 0.5}h14`} stroke="#000" />
          </g>
        );
      })}
      <path d="M664 1550l12 12-12 12z" />
    </svg>
  );
}

/* Mixed latin / CJK line; every glyph gets its own advance. */
function Glyphs({ text, x, y }: { text: string; x: number; y: number }) {
  let pen = x;
  return (
    <>
      {[...text].map((ch, i) => {
        const cjk = ch !== "?";
        const at = pen;
        pen += cjk ? 350.3 : 194.7;
        return cjk ? (
          <text key={i} x={at + 10} y={y - 1} fontSize="335" textLength="335" lengthAdjust="spacingAndGlyphs" fontWeight="300" strokeWidth="9">{ch}</text>
        ) : (
          <text key={i} x={at + 4} y={y - 1} fontSize="362" textLength="187" lengthAdjust="spacingAndGlyphs">{ch}</text>
        );
      })}
    </>
  );
}

function Canvas() {
  const dots: ReactNode[] = [];
  for (let i = 0; i < 16; i++)
    for (let j = 0; j < 9; j++)
      dots.push(<rect key={`${i}-${j}`} x={Math.floor(763.7 + i * STEP)} y={Math.floor(242.5 + j * 192.87)} width="1" height="1" fill="#888" />);
  return (
    <svg viewBox="684 242 3076 1574" className="h-[1574px] w-[3076px] bg-black [-webkit-text-stroke:initial]">
      <path d="M763.500 242v1574M2692.500 242v1574" stroke="#2c2c2c" />
      <g fill="#6a2d2d" stroke="#6a2d2d" strokeWidth="3" fontWeight="400" fontFamily="Liberation Sans, Noto Sans CJK JP, sans-serif">
        <text x="1751" y="556.600" fontSize="363" textLength="297" lengthAdjust="spacingAndGlyphs">M</text>
        <text x="2045" y="556.600" fontSize="344" textLength="642" lengthAdjust="spacingAndGlyphs">t.fuji</text>
        <Glyphs text="?富?士?山?" x={1306.9} y={949.4} />
        <text x="1788" y="1339.300" fontSize="361" textLength="233" lengthAdjust="spacingAndGlyphs">S</text>
        <text x="2022" y="1339.300" fontSize="344" textLength="641" lengthAdjust="spacingAndGlyphs">ushi</text>
        <Glyphs text="?寿?司" x={1693} y={1730.5} />
      </g>
      <path d="M2692.500 242v1574" stroke="#ffffff" strokeOpacity=".1" />
      {dots}
      <rect x={CX - 9.7} y="1006" width="20" height="20" fill="#0000a8" stroke="#9a9ad8" />
    </svg>
  );
}

function DocWindow() {
  return (
    <div className={clsx("flex w-[3140px] shrink-0 flex-col", thin)}>
      <div className="flex h-[38px] w-[3139px] items-center rounded-t-md border-2 border-b-0 border-[#3a6f92] pr-2 pl-2">
        <Logo className="size-5" />
        <span className="flex-1 pl-1.5 text-center text-[18px] tracking-[-0.8px]">33243326enbug.dxf</span>
        <CloseBox className="size-[21px]" />
      </div>
      <div className="ml-[34px] h-[34px]"><HRuler /></div>
      <div className="flex h-[1574px]">
        <VRuler />
        <Canvas />
        <div className={clsx("flex w-[29px] flex-col", checker)}>
          <ScrollBtn dir="up" className="h-[35px]" />
          <div className={clsx("mt-[367px] h-[768px]", thumb)} />
          <ScrollBtn dir="down" className="mt-auto h-[36px]" />
        </div>
      </div>
      <div className="ml-[34px] flex h-[30px] items-center">
        <div className={clsx("flex h-[30px] w-[3000px]", checker)}>
          <ScrollBtn dir="left" className="w-9" />
          <div className={clsx("ml-[140px] w-[2649px]", thumb)} />
          <ScrollBtn dir="right" className="ml-auto w-9" />
        </div>
        <span className="flex-1 text-right text-[17px] whitespace-nowrap">10 &lt; 100</span>
      </div>

      {/* Command line */}
      <DockTitle className="mt-[7px] w-[3139px]">Command Line</DockTitle>
      <div className="mt-[5px] flex h-[116px] w-[3140px] flex-col border border-[#8d99a2] px-px pt-px">
        <div className="flex h-[71px] w-[3135px] shrink-0 justify-between overflow-hidden rounded-md border-2 border-[#3a6f92]">
          <div className="pt-[7px] pl-[7px] text-[18px] leading-[18.500px] tracking-[-0.6px] whitespace-nowrap">
            <div>QCAD Professional 3.32.6 / Qt 5.13.2 / Windows x86_64</div>
            <div className="text-[#0000d8]"><i className="ml-0.5 font-normal">Command:</i> new</div>
            <div>Opening drawing: I:/tmp/bugreport-qcad3326/33243326enbug.dxf...</div>
            <div>Drawing loaded successfully: I:/tmp/bugreport-qcad3326/33243326enbug.dxf</div>
          </div>
          <div className="flex w-[29px] flex-col">
            <ScrollBtn dir="up" className="h-[30px]" />
            <div className={clsx("flex-1", checker)} />
            <ScrollBtn dir="down" className="h-[33px]" />
          </div>
        </div>
        <div className="h-[2px] w-full shrink-0 bg-[#cddcea]" />
        <div className="mt-[2px] flex h-9 items-center">
          <span className="w-[84px] text-[18px] tracking-[-0.5px]">Command:</span>
          <div className="h-9 flex-1 rounded-md border-2 border-[#7a91a0] bg-[#99afbe]" />
          <Btn on className="h-[34px] w-[34px]">
            <Svg className="h-[15px] w-5" box="0 0 20 15">
              <path d="M.7.7h18.600v13.600H.7z" stroke="#1c2a36" strokeWidth="1.300" />
              <path d="M0 0h20v4H0z" fill="#000" />
              <path d="M15 1.500h2v1h-2z" fill="#ccc" />
            </Svg>
          </Btn>
        </div>
      </div>
    </div>
  );
}

/* ---------- right bar ---------- */

function Pane({ on = true, children }: { on?: boolean; children: ReactNode }) {
  return (
    <Btn on={on} className={TB}>
      <Svg className={clsx("size-8", on && "ml-1")}>
        <path d="M.7.7h30.600v30.600H.7z" fill="#fff" stroke="#444f58" strokeWidth="1.400" />
        <path d="M0 0h32v5.500H0z" fill="#000" />
        <path d="M1 1h4v4H1z" fill="#fff" />
        {children}
      </Svg>
    </Btn>
  );
}

const PaneSep = () => <div className="my-[3px] ml-[5px] h-[2px] w-[34px] bg-[#98a4ac]" />;

function RightBar() {
  return (
    <div className="h-full w-[49px] border-t border-r-2 border-b-2 border-l border-t-white border-r-[#8d99a2] border-b-[#8d99a2] border-l-white">
      <Dots className="mt-0.5 ml-0.5 h-2 w-[43px]" />
      <div className="mt-[3px] flex flex-col">
        <Pane>
          <path d="M8 15l10-4v13L8 27z" fill="#888" stroke="#444" />
          <path d="M13 15l11-4v13l-11 3z" fill="#eee" stroke="#555" />
          <path d="M16 24l6-3V14z" stroke="#e33" />
        </Pane>
        <Pane>
          <path d="M8 11h13v10H8z" fill="#fdf0cb" stroke="#555" />
          <circle cx="18" cy="20" r="5.500" fill="#fdf0cb" fillOpacity=".8" stroke="#555" />
        </Pane>
        <Pane on={false}>
          <rect x="7" y="12" width="19" height="12" rx="1.500" fill="#f8f9fb" stroke="#a9bcd8" />
        </Pane>
        <PaneSep />
        <Pane>
          <path d="M4 9h5v5H4zM4 16h5v5H4zM4 23h5v5H4z" fill="#000" />
          <path d="M12 9.500h16v4H12zM12 16.500h16v4H12zM12 23.500h16v4H12z" fill="#fff" stroke="#555" />
        </Pane>
        <Pane>
          <path d="M8 11h16l-6 8v7l-3-2v-5z" fill="#9a9a9a" stroke="#555" />
          <path d="M8 11.500h16" stroke="#333" strokeWidth="2" />
        </Pane>
        <Pane>
          <path d="M7 10l5 5h4v7h-4l-5 5z" fill="#eee" stroke="#333" />
          <path d="M15 14h8l1.500 1.500v6L23 23h-8z" fill="#555" stroke="#333" />
          <path d="M5 18.500h22" stroke="#e44" strokeWidth=".8" strokeDasharray="3 1" />
        </Pane>
        <PaneSep />
        <Pane>
          <path d="M3 10h16M3 13.500h15M3 17.500h18M3 21.500h19" stroke="#666" strokeDasharray="5 1" />
          <path d="M1 26h30" stroke="#222" />
          <path d="M3 29h3M12 29h16" stroke="#555" strokeWidth="2" />
        </Pane>
        <Pane>
          <svg x="7" y="8" width="18" height="22" viewBox="0 0 32 32">
            <rect x="4" y="4" width="24" height="26" fill="#b9822f" stroke="#7a5014" />
            <path d="M8 7h16v17l-4 4H8z" fill="#f6f6f4" />
            <path d="M11 13h11M11 17h9M11 21h8" stroke="#aaa" strokeWidth="1.400" />
            <path d="M9 7V3h14v4z" fill="#8f8f88" />
          </svg>
        </Pane>
      </div>
    </div>
  );
}

function StatusBar() {
  return (
    <div className={clsx("flex h-[90px] rounded-md border-2 border-[#001b40] text-[18px]", thin)}>
      <div className="my-1 flex w-[653px] flex-col border-r-2 border-[#8d99a2] pl-0.5 tracking-[-1px]">
        <span className="mt-[3px] leading-8">-4.1175,31.5747</span>
        <span className="mt-2 leading-8">@-4.1175,31.5747</span>
      </div>
      <div className="my-1 flex w-[900px] flex-col border-l border-[#d8e0e6] pl-[5px] tracking-[-1px]">
        <span className="mt-[3px] leading-8">31.8421&lt;97.43°</span>
        <span className="mt-2 leading-8">@31.8421&lt;97.43°</span>
      </div>
      <div className="mt-[26px] w-[276px] text-right leading-[18px] tracking-[-0.2px]">
        <div>Select entity or region</div>
        <div>Move entity or reference</div>
      </div>
      <Svg className="mt-3 ml-[24px] h-[60px] w-[37px]" box="0 0 37 60">
        <rect x="1" y="1" width="35" height="58" rx="17" fill="#fff" stroke="#666" strokeWidth="1.500" />
        <path d="M1 28c8-6 27-6 35 0" stroke="#555" strokeWidth="3" />
        <path d="M18.500 1v24" stroke="#666" strokeWidth="1.500" />
        <rect x="15.500" y="5" width="6" height="14" rx="3" fill="#f4f4f4" stroke="#555" strokeWidth="1.500" />
      </Svg>
      <div className="mt-[26px] ml-[551px] leading-[18px]">
        <div>Selected entities:</div>
        <div>1 Text on Layer "CONTOUR".</div>
      </div>
    </div>
  );
}

export default function App() {
  return (
    <div className="h-[2088px] w-[3840px] overflow-hidden bg-[#b6c3cb]">
      <Header />
      <Toolbars />
      <div className="flex h-[1828px]">
        <ToolBox />
        <Docks />
        <DocWindow />
        <RightBar />
      </div>
      <StatusBar />
    </div>
  );
}
